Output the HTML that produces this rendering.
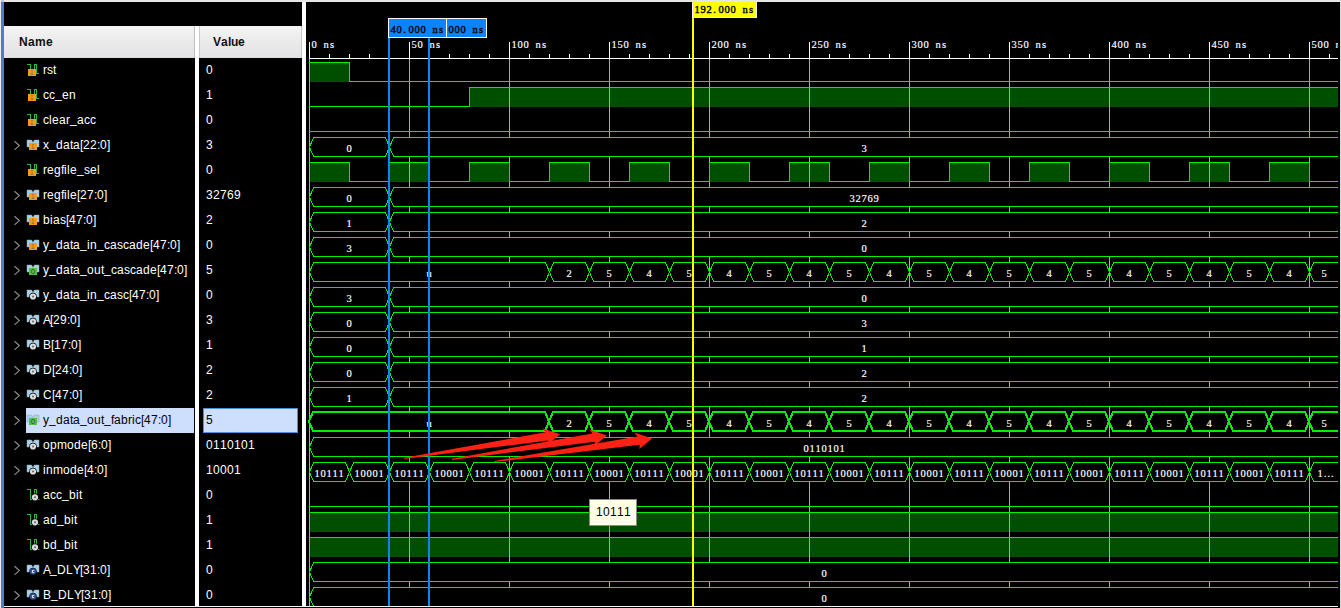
<!DOCTYPE html>
<html><head><meta charset="utf-8"><title>Waveform</title>
<style>
html,body{margin:0;padding:0;background:#000;overflow:hidden}
svg{display:block}
.a{font-family:'Liberation Sans',Arial,sans-serif;font-size:12px}
.m{font-family:'Liberation Serif','Times New Roman',serif;font-size:10.5px;stroke-width:0.18px;paint-order:stroke}
.w{fill:none;stroke:#00f000;stroke-width:1;shape-rendering:crispEdges}
.b{fill:#000;stroke:#00f000;stroke-width:1;shape-rendering:crispEdges}
.t{fill:none;stroke:#00f000;stroke-width:1;shape-rendering:crispEdges}
.s{fill:#000;stroke:#00f000;stroke-width:2;shape-rendering:crispEdges;stroke-linejoin:miter}
</style></head><body>
<svg width="1341" height="608" viewBox="0 0 1341 608">
<defs>
<linearGradient id="hg" x1="0" y1="0" x2="0" y2="1"><stop offset="0" stop-color="#f5f5f5"/><stop offset="0.5" stop-color="#eaeaeb"/><stop offset="1" stop-color="#e3e3e5"/></linearGradient>
<clipPath id="wc"><rect x="306" y="2" width="1032" height="604"/></clipPath>
</defs>

<rect x="0" y="0" width="1341" height="608" fill="#000"/>
<rect x="0" y="0" width="1341" height="2" fill="#e6e6e6"/>
<rect x="0" y="0" width="1" height="608" fill="#f0f0f0"/>
<rect x="1" y="0" width="3" height="608" fill="#4b7dd1"/>
<rect x="1" y="0" width="3" height="2" fill="#b8c8e8"/>
<rect x="195" y="26" width="4" height="580" fill="#fff"/>
<rect x="302" y="2" width="4" height="604" fill="#fff"/>
<rect x="1340" y="0" width="1" height="608" fill="#d8d8d8"/>
<rect x="4" y="606" width="1334" height="1" fill="#f4f4f4"/>
<rect x="1338" y="606" width="2" height="1" fill="#000"/>
<rect x="4" y="26" width="191" height="32" fill="url(#hg)"/>
<rect x="199" y="26" width="103" height="32" fill="url(#hg)"/>
<rect x="194" y="26" width="1" height="32" fill="#bfbfbf"/>
<rect x="199" y="26" width="1" height="32" fill="#c8c8c8"/>
<rect x="301" y="26" width="1" height="32" fill="#c8c8c8"/>
<rect x="4" y="57" width="190" height="1" fill="#dededf"/>
<rect x="200" y="57" width="101" height="1" fill="#dededf"/>
<text x="19 28 35 46" y="46" fill="#111" font-weight="bold" class="a">Name</text>
<text x="213 221 228 231 238" y="46" fill="#111" font-weight="bold" class="a">Value</text>
<path d="M27,64.5H30.5V70M34.5,70V64.5H36.5V73.5H39" fill="none" stroke="#35b14c" stroke-width="1.1"/>
<rect x="28" y="69" width="8" height="7" fill="#f79a1b"/>
<path d="M31,70.5H33M32,70.5V73.5" stroke="#9a6a3a" stroke-width="0.9" fill="none" opacity="0.7"/>
<ellipse cx="32" cy="74.2" rx="1.5" ry="0.6" fill="#5b6478" opacity="0.85"/>
<text x="43 47 53" y="74" fill="#fff" class="a">rst</text>
<text x="206" y="74" fill="#fff" class="a">0</text>
<path d="M27,89.5H30.5V95M34.5,95V89.5H36.5V98.5H39" fill="none" stroke="#35b14c" stroke-width="1.1"/>
<rect x="28" y="94" width="8" height="7" fill="#f79a1b"/>
<path d="M31,95.5H33M32,95.5V98.5" stroke="#9a6a3a" stroke-width="0.9" fill="none" opacity="0.7"/>
<ellipse cx="32" cy="99.2" rx="1.5" ry="0.6" fill="#5b6478" opacity="0.85"/>
<text x="43 49 55 62 69" y="99 99 98 99 99" fill="#fff" class="a">cc_en</text>
<text x="206" y="99" fill="#fff" class="a">1</text>
<path d="M27,114.5H30.5V120M34.5,120V114.5H36.5V123.5H39" fill="none" stroke="#35b14c" stroke-width="1.1"/>
<rect x="28" y="119" width="8" height="7" fill="#f79a1b"/>
<path d="M31,120.5H33M32,120.5V123.5" stroke="#9a6a3a" stroke-width="0.9" fill="none" opacity="0.7"/>
<ellipse cx="32" cy="124.2" rx="1.5" ry="0.6" fill="#5b6478" opacity="0.85"/>
<text x="43 49 52 59 66 70 77 84 90" y="124 124 124 124 124 123 124 124 124" fill="#fff" class="a">clear_acc</text>
<text x="206" y="124" fill="#fff" class="a">0</text>
<path d="M14.5,141.3L19.3,145.6L14.5,149.9" fill="none" stroke="#8c8c8c" stroke-width="1.2"/>
<path d="M27,140H31.6L33,142.6L34.4,140H39V147H36.5L35,145H31L29.5,147H27Z" fill="#a9d0e8" stroke="#8fa6b4" stroke-width="0.5"/>
<rect x="29" y="143" width="8" height="7" fill="#f79a1b"/>
<path d="M32,144.5H34M33,144.5V147.5" stroke="#9a6a3a" stroke-width="0.9" fill="none" opacity="0.7"/>
<ellipse cx="33" cy="148.2" rx="1.5" ry="0.6" fill="#5b6478" opacity="0.85"/>
<text x="43 49 56 63 70 73 80 83 90 97 100 107" y="149 148 149 149 149 149 149 149 149 149 149 149" fill="#fff" class="a">x_data[22:0]</text>
<text x="206" y="149" fill="#fff" class="a">3</text>
<path d="M27,164.5H30.5V170M34.5,170V164.5H36.5V173.5H39" fill="none" stroke="#35b14c" stroke-width="1.1"/>
<rect x="28" y="169" width="8" height="7" fill="#f79a1b"/>
<path d="M31,170.5H33M32,170.5V173.5" stroke="#9a6a3a" stroke-width="0.9" fill="none" opacity="0.7"/>
<ellipse cx="32" cy="174.2" rx="1.5" ry="0.6" fill="#5b6478" opacity="0.85"/>
<text x="43 47 54 61 64 67 70 77 84 90 97" y="174 174 174 174 174 174 174 173 174 174 174" fill="#fff" class="a">regfile_sel</text>
<text x="206" y="174" fill="#fff" class="a">0</text>
<path d="M14.5,191.3L19.3,195.6L14.5,199.9" fill="none" stroke="#8c8c8c" stroke-width="1.2"/>
<path d="M27,190H31.6L33,192.6L34.4,190H39V197H36.5L35,195H31L29.5,197H27Z" fill="#a9d0e8" stroke="#8fa6b4" stroke-width="0.5"/>
<rect x="29" y="193" width="8" height="7" fill="#f79a1b"/>
<path d="M32,194.5H34M33,194.5V197.5" stroke="#9a6a3a" stroke-width="0.9" fill="none" opacity="0.7"/>
<ellipse cx="33" cy="198.2" rx="1.5" ry="0.6" fill="#5b6478" opacity="0.85"/>
<text x="43 47 54 61 64 67 70 77 80 87 94 97 104" y="199" fill="#fff" class="a">regfile[27:0]</text>
<text x="206 213 220 227 234" y="199" fill="#fff" class="a">32769</text>
<path d="M14.5,216.3L19.3,220.6L14.5,224.9" fill="none" stroke="#8c8c8c" stroke-width="1.2"/>
<path d="M27,215H31.6L33,217.6L34.4,215H39V222H36.5L35,220H31L29.5,222H27Z" fill="#a9d0e8" stroke="#8fa6b4" stroke-width="0.5"/>
<rect x="29" y="218" width="8" height="7" fill="#f79a1b"/>
<path d="M32,219.5H34M33,219.5V222.5" stroke="#9a6a3a" stroke-width="0.9" fill="none" opacity="0.7"/>
<ellipse cx="33" cy="223.2" rx="1.5" ry="0.6" fill="#5b6478" opacity="0.85"/>
<text x="43 50 53 60 66 69 76 83 86 93" y="224" fill="#fff" class="a">bias[47:0]</text>
<text x="206" y="224" fill="#fff" class="a">2</text>
<path d="M14.5,241.3L19.3,245.6L14.5,249.9" fill="none" stroke="#8c8c8c" stroke-width="1.2"/>
<path d="M27,240H31.6L33,242.6L34.4,240H39V247H36.5L35,245H31L29.5,247H27Z" fill="#a9d0e8" stroke="#8fa6b4" stroke-width="0.5"/>
<rect x="29" y="243" width="8" height="7" fill="#f79a1b"/>
<path d="M32,244.5H34M33,244.5V247.5" stroke="#9a6a3a" stroke-width="0.9" fill="none" opacity="0.7"/>
<ellipse cx="33" cy="248.2" rx="1.5" ry="0.6" fill="#5b6478" opacity="0.85"/>
<text x="43 49 56 63 70 73 80 87 90 97 104 110 117 123 129 136 143 150 153 160 167 170 177" y="249 248 249 249 249 249 248 249 249 248 249 249 249 249 249 249 249 249 249 249 249 249 249" fill="#fff" class="a">y_data_in_cascade[47:0]</text>
<text x="206" y="249" fill="#fff" class="a">0</text>
<path d="M14.5,266.3L19.3,270.6L14.5,274.9" fill="none" stroke="#8c8c8c" stroke-width="1.2"/>
<path d="M27,265H31.6L33,267.6L34.4,265H39V272H36.5L35,270H31L29.5,272H27Z" fill="#a9d0e8" stroke="#8fa6b4" stroke-width="0.5"/>
<rect x="29" y="268" width="8" height="7" fill="#4fbf4a"/>
<ellipse cx="33" cy="271.5" rx="1.6" ry="2.2" fill="none" stroke="#4a5a4a" stroke-width="0.9"/>
<text x="43 49 56 63 70 73 80 87 94 101 104 111 117 124 130 136 143 150 157 160 167 174 177 184" y="274 273 274 274 274 274 273 274 274 274 273 274 274 274 274 274 274 274 274 274 274 274 274 274" fill="#fff" class="a">y_data_out_cascade[47:0]</text>
<text x="206" y="274" fill="#fff" class="a">5</text>
<path d="M14.5,291.3L19.3,295.6L14.5,299.9" fill="none" stroke="#8c8c8c" stroke-width="1.2"/>
<path d="M27,290H31.6L33,292.6L34.4,290H39V297H36.5L35,295H31L29.5,297H27Z" fill="#a9d0e8" stroke="#8fa6b4" stroke-width="0.5"/>
<circle cx="33" cy="296.5" r="3.7" fill="#000"/>
<circle cx="33" cy="296.5" r="3.1" fill="#dcdcdc"/>
<circle cx="33" cy="296.5" r="1.0" fill="#606060"/>
<text x="43 49 56 63 70 73 80 87 90 97 104 110 117 123 129 132 139 146 149 156" y="299 298 299 299 299 299 298 299 299 298 299 299 299 299 299 299 299 299 299 299" fill="#fff" class="a">y_data_in_casc[47:0]</text>
<text x="206" y="299" fill="#fff" class="a">0</text>
<path d="M14.5,316.3L19.3,320.6L14.5,324.9" fill="none" stroke="#8c8c8c" stroke-width="1.2"/>
<path d="M27,315H31.6L33,317.6L34.4,315H39V322H36.5L35,320H31L29.5,322H27Z" fill="#a9d0e8" stroke="#8fa6b4" stroke-width="0.5"/>
<circle cx="33" cy="321.5" r="3.7" fill="#000"/>
<circle cx="33" cy="321.5" r="3.1" fill="#dcdcdc"/>
<circle cx="33" cy="321.5" r="1.0" fill="#606060"/>
<text x="43 50 53 60 67 70 77" y="324" fill="#fff" class="a">A[29:0]</text>
<text x="206" y="324" fill="#fff" class="a">3</text>
<path d="M14.5,341.3L19.3,345.6L14.5,349.9" fill="none" stroke="#8c8c8c" stroke-width="1.2"/>
<path d="M27,340H31.6L33,342.6L34.4,340H39V347H36.5L35,345H31L29.5,347H27Z" fill="#a9d0e8" stroke="#8fa6b4" stroke-width="0.5"/>
<circle cx="33" cy="346.5" r="3.7" fill="#000"/>
<circle cx="33" cy="346.5" r="3.1" fill="#dcdcdc"/>
<circle cx="33" cy="346.5" r="1.0" fill="#606060"/>
<text x="43 51 54 61 68 71 78" y="349" fill="#fff" class="a">B[17:0]</text>
<text x="206" y="349" fill="#fff" class="a">1</text>
<path d="M14.5,366.3L19.3,370.6L14.5,374.9" fill="none" stroke="#8c8c8c" stroke-width="1.2"/>
<path d="M27,365H31.6L33,367.6L34.4,365H39V372H36.5L35,370H31L29.5,372H27Z" fill="#a9d0e8" stroke="#8fa6b4" stroke-width="0.5"/>
<circle cx="33" cy="371.5" r="3.7" fill="#000"/>
<circle cx="33" cy="371.5" r="3.1" fill="#dcdcdc"/>
<circle cx="33" cy="371.5" r="1.0" fill="#606060"/>
<text x="43 52 55 62 69 72 79" y="374" fill="#fff" class="a">D[24:0]</text>
<text x="206" y="374" fill="#fff" class="a">2</text>
<path d="M14.5,391.3L19.3,395.6L14.5,399.9" fill="none" stroke="#8c8c8c" stroke-width="1.2"/>
<path d="M27,390H31.6L33,392.6L34.4,390H39V397H36.5L35,395H31L29.5,397H27Z" fill="#a9d0e8" stroke="#8fa6b4" stroke-width="0.5"/>
<circle cx="33" cy="396.5" r="3.7" fill="#000"/>
<circle cx="33" cy="396.5" r="3.1" fill="#dcdcdc"/>
<circle cx="33" cy="396.5" r="1.0" fill="#606060"/>
<text x="43 52 55 62 69 72 79" y="399" fill="#fff" class="a">C[47:0]</text>
<text x="206" y="399" fill="#fff" class="a">2</text>
<rect x="26" y="408" width="168" height="25" fill="#cddffd"/>
<rect x="203" y="408" width="95" height="25" fill="#4a90d9"/>
<rect x="204" y="409" width="93" height="23" fill="#cddffd"/>
<path d="M14.5,416.3L19.3,420.6L14.5,424.9" fill="none" stroke="#8c8c8c" stroke-width="1.2"/>
<path d="M27,415H31.6L33,417.6L34.4,415H39V422H36.5L35,420H31L29.5,422H27Z" fill="#a9d0e8" stroke="#8fa6b4" stroke-width="0.5"/>
<rect x="29" y="418" width="8" height="7" fill="#4fbf4a"/>
<ellipse cx="33" cy="421.5" rx="1.6" ry="2.2" fill="none" stroke="#4a5a4a" stroke-width="0.9"/>
<text x="43 49 56 63 70 73 80 87 94 101 104 111 114 121 128 132 135 141 144 151 158 161 168" y="424 423 424 424 424 424 423 424 424 424 423 424 424 424 424 424 424 424 424 424 424 424 424" fill="#000" class="a">y_data_out_fabric[47:0]</text>
<text x="206" y="424" fill="#000" class="a">5</text>
<path d="M14.5,441.3L19.3,445.6L14.5,449.9" fill="none" stroke="#8c8c8c" stroke-width="1.2"/>
<path d="M27,440H31.6L33,442.6L34.4,440H39V447H36.5L35,445H31L29.5,447H27Z" fill="#a9d0e8" stroke="#8fa6b4" stroke-width="0.5"/>
<circle cx="33" cy="446.5" r="3.7" fill="#000"/>
<circle cx="33" cy="446.5" r="3.1" fill="#dcdcdc"/>
<circle cx="33" cy="446.5" r="1.0" fill="#606060"/>
<text x="43 50 57 67 74 81 88 91 98 101 108" y="449" fill="#fff" class="a">opmode[6:0]</text>
<text x="206 213 220 227 234 241 248" y="449" fill="#fff" class="a">0110101</text>
<path d="M14.5,466.3L19.3,470.6L14.5,474.9" fill="none" stroke="#8c8c8c" stroke-width="1.2"/>
<path d="M27,465H31.6L33,467.6L34.4,465H39V472H36.5L35,470H31L29.5,472H27Z" fill="#a9d0e8" stroke="#8fa6b4" stroke-width="0.5"/>
<circle cx="33" cy="471.5" r="3.7" fill="#000"/>
<circle cx="33" cy="471.5" r="3.1" fill="#dcdcdc"/>
<circle cx="33" cy="471.5" r="1.0" fill="#606060"/>
<text x="43 46 53 63 70 77 84 87 94 97 104" y="474" fill="#fff" class="a">inmode[4:0]</text>
<text x="206 213 220 227 234" y="474" fill="#fff" class="a">10001</text>
<path d="M27,489.5H30.5V499.5H33M34.5,495V489.5H36.5V495M37,499.5H39.5" fill="none" stroke="#35b14c" stroke-width="1.1"/>
<circle cx="35" cy="497.3" r="3.7" fill="#000"/>
<circle cx="35" cy="497.3" r="3.1" fill="#dcdcdc"/>
<circle cx="35" cy="497.3" r="1.0" fill="#606060"/>
<text x="43 50 56 62 69 76 79" y="499 499 499 498 499 499 499" fill="#fff" class="a">acc_bit</text>
<text x="206" y="499" fill="#fff" class="a">0</text>
<path d="M27,514.5H30.5V524.5H33M34.5,520V514.5H36.5V520M37,524.5H39.5" fill="none" stroke="#35b14c" stroke-width="1.1"/>
<circle cx="35" cy="522.3" r="3.7" fill="#000"/>
<circle cx="35" cy="522.3" r="3.1" fill="#dcdcdc"/>
<circle cx="35" cy="522.3" r="1.0" fill="#606060"/>
<text x="43 50 57 64 71 74" y="524 524 523 524 524 524" fill="#fff" class="a">ad_bit</text>
<text x="206" y="524" fill="#fff" class="a">1</text>
<path d="M27,539.5H30.5V549.5H33M34.5,545V539.5H36.5V545M37,549.5H39.5" fill="none" stroke="#35b14c" stroke-width="1.1"/>
<circle cx="35" cy="547.3" r="3.7" fill="#000"/>
<circle cx="35" cy="547.3" r="3.1" fill="#dcdcdc"/>
<circle cx="35" cy="547.3" r="1.0" fill="#606060"/>
<text x="43 50 57 64 71 74" y="549 549 548 549 549 549" fill="#fff" class="a">bd_bit</text>
<text x="206" y="549" fill="#fff" class="a">1</text>
<path d="M14.5,566.3L19.3,570.6L14.5,574.9" fill="none" stroke="#8c8c8c" stroke-width="1.2"/>
<path d="M27,565H31.6L33,567.6L34.4,565H39V572H36.5L35,570H31L29.5,572H27Z" fill="#a9d0e8" stroke="#8fa6b4" stroke-width="0.5"/>
<circle cx="33" cy="571.5" r="3.7" fill="#000"/>
<circle cx="33" cy="571.5" r="3.2" fill="#2d4f90"/>
<path d="M34.3,570.4H32.4V572.6H34.3" fill="none" stroke="#fff" stroke-width="0.9"/>
<text x="43 50 57 66 73 80 83 90 97 100 107" y="574 573 574 574 574 574 574 574 574 574 574" fill="#fff" class="a">A_DLY[31:0]</text>
<text x="206" y="574" fill="#fff" class="a">0</text>
<path d="M14.5,591.3L19.3,595.6L14.5,599.9" fill="none" stroke="#8c8c8c" stroke-width="1.2"/>
<path d="M27,590H31.6L33,592.6L34.4,590H39V597H36.5L35,595H31L29.5,597H27Z" fill="#a9d0e8" stroke="#8fa6b4" stroke-width="0.5"/>
<circle cx="33" cy="596.5" r="3.7" fill="#000"/>
<circle cx="33" cy="596.5" r="3.2" fill="#2d4f90"/>
<path d="M34.3,595.4H32.4V597.6H34.3" fill="none" stroke="#fff" stroke-width="0.9"/>
<text x="43 51 58 67 74 81 84 91 98 101 108" y="599 598 599 599 599 599 599 599 599 599 599" fill="#fff" class="a">B_DLY[31:0]</text>
<text x="206" y="599" fill="#fff" class="a">0</text>
<g clip-path="url(#wc)">
<rect x="309" y="58" width="1029" height="1" fill="#fff"/>
<rect x="309" y="42" width="1" height="16" fill="#fff"/>
<text x="311.4 317.4 323.4 329.9" y="48" fill="#fff" stroke="#fff" class="m">0 ns</text>
<rect x="329" y="54" width="1" height="4" fill="#fff"/>
<rect x="349" y="54" width="1" height="4" fill="#fff"/>
<rect x="369" y="54" width="1" height="4" fill="#fff"/>
<rect x="389" y="54" width="1" height="4" fill="#fff"/>
<rect x="409" y="42" width="1" height="16" fill="#fff"/>
<text x="411.4 417.4 423.4 429.4 435.9" y="48" fill="#fff" stroke="#fff" class="m">50 ns</text>
<rect x="429" y="54" width="1" height="4" fill="#fff"/>
<rect x="449" y="54" width="1" height="4" fill="#fff"/>
<rect x="469" y="54" width="1" height="4" fill="#fff"/>
<rect x="489" y="54" width="1" height="4" fill="#fff"/>
<rect x="509" y="42" width="1" height="16" fill="#fff"/>
<text x="511.4 517.4 523.4 529.4 535.4 541.9" y="48" fill="#fff" stroke="#fff" class="m">100 ns</text>
<rect x="529" y="54" width="1" height="4" fill="#fff"/>
<rect x="549" y="54" width="1" height="4" fill="#fff"/>
<rect x="569" y="54" width="1" height="4" fill="#fff"/>
<rect x="589" y="54" width="1" height="4" fill="#fff"/>
<rect x="609" y="42" width="1" height="16" fill="#fff"/>
<text x="611.4 617.4 623.4 629.4 635.4 641.9" y="48" fill="#fff" stroke="#fff" class="m">150 ns</text>
<rect x="629" y="54" width="1" height="4" fill="#fff"/>
<rect x="649" y="54" width="1" height="4" fill="#fff"/>
<rect x="669" y="54" width="1" height="4" fill="#fff"/>
<rect x="689" y="54" width="1" height="4" fill="#fff"/>
<rect x="709" y="42" width="1" height="16" fill="#fff"/>
<text x="711.4 717.4 723.4 729.4 735.4 741.9" y="48" fill="#fff" stroke="#fff" class="m">200 ns</text>
<rect x="729" y="54" width="1" height="4" fill="#fff"/>
<rect x="749" y="54" width="1" height="4" fill="#fff"/>
<rect x="769" y="54" width="1" height="4" fill="#fff"/>
<rect x="789" y="54" width="1" height="4" fill="#fff"/>
<rect x="809" y="42" width="1" height="16" fill="#fff"/>
<text x="811.4 817.4 823.4 829.4 835.4 841.9" y="48" fill="#fff" stroke="#fff" class="m">250 ns</text>
<rect x="829" y="54" width="1" height="4" fill="#fff"/>
<rect x="849" y="54" width="1" height="4" fill="#fff"/>
<rect x="869" y="54" width="1" height="4" fill="#fff"/>
<rect x="889" y="54" width="1" height="4" fill="#fff"/>
<rect x="909" y="42" width="1" height="16" fill="#fff"/>
<text x="911.4 917.4 923.4 929.4 935.4 941.9" y="48" fill="#fff" stroke="#fff" class="m">300 ns</text>
<rect x="929" y="54" width="1" height="4" fill="#fff"/>
<rect x="949" y="54" width="1" height="4" fill="#fff"/>
<rect x="969" y="54" width="1" height="4" fill="#fff"/>
<rect x="989" y="54" width="1" height="4" fill="#fff"/>
<rect x="1009" y="42" width="1" height="16" fill="#fff"/>
<text x="1011.4 1017.4 1023.4 1029.4 1035.4 1041.9" y="48" fill="#fff" stroke="#fff" class="m">350 ns</text>
<rect x="1029" y="54" width="1" height="4" fill="#fff"/>
<rect x="1049" y="54" width="1" height="4" fill="#fff"/>
<rect x="1069" y="54" width="1" height="4" fill="#fff"/>
<rect x="1089" y="54" width="1" height="4" fill="#fff"/>
<rect x="1109" y="42" width="1" height="16" fill="#fff"/>
<text x="1111.4 1117.4 1123.4 1129.4 1135.4 1141.9" y="48" fill="#fff" stroke="#fff" class="m">400 ns</text>
<rect x="1129" y="54" width="1" height="4" fill="#fff"/>
<rect x="1149" y="54" width="1" height="4" fill="#fff"/>
<rect x="1169" y="54" width="1" height="4" fill="#fff"/>
<rect x="1189" y="54" width="1" height="4" fill="#fff"/>
<rect x="1209" y="42" width="1" height="16" fill="#fff"/>
<text x="1211.4 1217.4 1223.4 1229.4 1235.4 1241.9" y="48" fill="#fff" stroke="#fff" class="m">450 ns</text>
<rect x="1229" y="54" width="1" height="4" fill="#fff"/>
<rect x="1249" y="54" width="1" height="4" fill="#fff"/>
<rect x="1269" y="54" width="1" height="4" fill="#fff"/>
<rect x="1289" y="54" width="1" height="4" fill="#fff"/>
<rect x="1309" y="42" width="1" height="16" fill="#fff"/>
<text x="1311.4 1317.4 1323.4 1329.4 1335.4 1341.9" y="48" fill="#fff" stroke="#fff" class="m">500 ns</text>
<rect x="1329" y="54" width="1" height="4" fill="#fff"/>
<rect x="309" y="62" width="41" height="20" fill="#004e00"/>
<rect x="469" y="87" width="875" height="20" fill="#004e00"/>
<rect x="309" y="162" width="41" height="20" fill="#004e00"/>
<rect x="389" y="162" width="41" height="20" fill="#004e00"/>
<rect x="469" y="162" width="41" height="20" fill="#004e00"/>
<rect x="549" y="162" width="41" height="20" fill="#004e00"/>
<rect x="629" y="162" width="41" height="20" fill="#004e00"/>
<rect x="709" y="162" width="41" height="20" fill="#004e00"/>
<rect x="789" y="162" width="41" height="20" fill="#004e00"/>
<rect x="869" y="162" width="41" height="20" fill="#004e00"/>
<rect x="949" y="162" width="41" height="20" fill="#004e00"/>
<rect x="1029" y="162" width="41" height="20" fill="#004e00"/>
<rect x="1109" y="162" width="41" height="20" fill="#004e00"/>
<rect x="1189" y="162" width="41" height="20" fill="#004e00"/>
<rect x="1269" y="162" width="41" height="20" fill="#004e00"/>
<rect x="309" y="512" width="1035" height="20" fill="#004e00"/>
<rect x="309" y="537" width="1035" height="20" fill="#004e00"/>
<rect x="309" y="59" width="1" height="547" fill="#a8a8a8"/>
<rect x="409" y="59" width="1" height="547" fill="#a8a8a8"/>
<rect x="509" y="59" width="1" height="547" fill="#a8a8a8"/>
<rect x="609" y="59" width="1" height="547" fill="#a8a8a8"/>
<rect x="709" y="59" width="1" height="547" fill="#a8a8a8"/>
<rect x="809" y="59" width="1" height="547" fill="#a8a8a8"/>
<rect x="909" y="59" width="1" height="547" fill="#a8a8a8"/>
<rect x="1009" y="59" width="1" height="547" fill="#a8a8a8"/>
<rect x="1109" y="59" width="1" height="547" fill="#a8a8a8"/>
<rect x="1209" y="59" width="1" height="547" fill="#a8a8a8"/>
<rect x="1309" y="59" width="1" height="547" fill="#a8a8a8"/>
<path class="b" d="M309.5,147.0L313.5,137.5H385.5L389.5,147.0L385.5,156.5H313.5Z"/>
<path class="b" d="M1346,137.5H393.5L389.5,147.0L393.5,156.5H1346"/>
<text x="346.4" y="152" fill="#fff" stroke="#fff" class="m">0</text>
<text x="861.4" y="152" fill="#fff" stroke="#fff" class="m">3</text>
<path class="b" d="M309.5,197.0L313.5,187.5H385.5L389.5,197.0L385.5,206.5H313.5Z"/>
<path class="b" d="M1346,187.5H393.5L389.5,197.0L393.5,206.5H1346"/>
<text x="346.4" y="202" fill="#fff" stroke="#fff" class="m">0</text>
<text x="849.4 855.4 861.4 867.4 873.4" y="202" fill="#fff" stroke="#fff" class="m">32769</text>
<path class="b" d="M309.5,222.0L313.5,212.5H385.5L389.5,222.0L385.5,231.5H313.5Z"/>
<path class="b" d="M1346,212.5H393.5L389.5,222.0L393.5,231.5H1346"/>
<text x="346.4" y="227" fill="#fff" stroke="#fff" class="m">1</text>
<text x="861.4" y="227" fill="#fff" stroke="#fff" class="m">2</text>
<path class="b" d="M309.5,247.0L313.5,237.5H385.5L389.5,247.0L385.5,256.5H313.5Z"/>
<path class="b" d="M1346,237.5H393.5L389.5,247.0L393.5,256.5H1346"/>
<text x="346.4" y="252" fill="#fff" stroke="#fff" class="m">3</text>
<text x="861.4" y="252" fill="#fff" stroke="#fff" class="m">0</text>
<path class="b" d="M309.5,272.0L313.5,262.5H545.5L549.5,272.0L545.5,281.5H313.5Z"/>
<path class="b" d="M549.5,272.0L553.5,262.5H585.5L589.5,272.0L585.5,281.5H553.5Z"/>
<path class="b" d="M589.5,272.0L593.5,262.5H625.5L629.5,272.0L625.5,281.5H593.5Z"/>
<path class="b" d="M629.5,272.0L633.5,262.5H665.5L669.5,272.0L665.5,281.5H633.5Z"/>
<path class="b" d="M669.5,272.0L673.5,262.5H705.5L709.5,272.0L705.5,281.5H673.5Z"/>
<path class="b" d="M709.5,272.0L713.5,262.5H745.5L749.5,272.0L745.5,281.5H713.5Z"/>
<path class="b" d="M749.5,272.0L753.5,262.5H785.5L789.5,272.0L785.5,281.5H753.5Z"/>
<path class="b" d="M789.5,272.0L793.5,262.5H825.5L829.5,272.0L825.5,281.5H793.5Z"/>
<path class="b" d="M829.5,272.0L833.5,262.5H865.5L869.5,272.0L865.5,281.5H833.5Z"/>
<path class="b" d="M869.5,272.0L873.5,262.5H905.5L909.5,272.0L905.5,281.5H873.5Z"/>
<path class="b" d="M909.5,272.0L913.5,262.5H945.5L949.5,272.0L945.5,281.5H913.5Z"/>
<path class="b" d="M949.5,272.0L953.5,262.5H985.5L989.5,272.0L985.5,281.5H953.5Z"/>
<path class="b" d="M989.5,272.0L993.5,262.5H1025.5L1029.5,272.0L1025.5,281.5H993.5Z"/>
<path class="b" d="M1029.5,272.0L1033.5,262.5H1065.5L1069.5,272.0L1065.5,281.5H1033.5Z"/>
<path class="b" d="M1069.5,272.0L1073.5,262.5H1105.5L1109.5,272.0L1105.5,281.5H1073.5Z"/>
<path class="b" d="M1109.5,272.0L1113.5,262.5H1145.5L1149.5,272.0L1145.5,281.5H1113.5Z"/>
<path class="b" d="M1149.5,272.0L1153.5,262.5H1185.5L1189.5,272.0L1185.5,281.5H1153.5Z"/>
<path class="b" d="M1189.5,272.0L1193.5,262.5H1225.5L1229.5,272.0L1225.5,281.5H1193.5Z"/>
<path class="b" d="M1229.5,272.0L1233.5,262.5H1265.5L1269.5,272.0L1265.5,281.5H1233.5Z"/>
<path class="b" d="M1269.5,272.0L1273.5,262.5H1305.5L1309.5,272.0L1305.5,281.5H1273.5Z"/>
<path class="b" d="M1346,262.5H1313.5L1309.5,272.0L1313.5,281.5H1346"/>
<text x="426.4" y="277" fill="#fff" stroke="#fff" class="m">u</text>
<text x="566.4" y="277" fill="#fff" stroke="#fff" class="m">2</text>
<text x="606.4" y="277" fill="#fff" stroke="#fff" class="m">5</text>
<text x="646.4" y="277" fill="#fff" stroke="#fff" class="m">4</text>
<text x="686.4" y="277" fill="#fff" stroke="#fff" class="m">5</text>
<text x="726.4" y="277" fill="#fff" stroke="#fff" class="m">4</text>
<text x="766.4" y="277" fill="#fff" stroke="#fff" class="m">5</text>
<text x="806.4" y="277" fill="#fff" stroke="#fff" class="m">4</text>
<text x="846.4" y="277" fill="#fff" stroke="#fff" class="m">5</text>
<text x="886.4" y="277" fill="#fff" stroke="#fff" class="m">4</text>
<text x="926.4" y="277" fill="#fff" stroke="#fff" class="m">5</text>
<text x="966.4" y="277" fill="#fff" stroke="#fff" class="m">4</text>
<text x="1006.4" y="277" fill="#fff" stroke="#fff" class="m">5</text>
<text x="1046.4" y="277" fill="#fff" stroke="#fff" class="m">4</text>
<text x="1086.4" y="277" fill="#fff" stroke="#fff" class="m">5</text>
<text x="1126.4" y="277" fill="#fff" stroke="#fff" class="m">4</text>
<text x="1166.4" y="277" fill="#fff" stroke="#fff" class="m">5</text>
<text x="1206.4" y="277" fill="#fff" stroke="#fff" class="m">4</text>
<text x="1246.4" y="277" fill="#fff" stroke="#fff" class="m">5</text>
<text x="1286.4" y="277" fill="#fff" stroke="#fff" class="m">4</text>
<text x="1321.4" y="277" fill="#fff" stroke="#fff" class="m">5</text>
<path class="b" d="M309.5,297.0L313.5,287.5H385.5L389.5,297.0L385.5,306.5H313.5Z"/>
<path class="b" d="M1346,287.5H393.5L389.5,297.0L393.5,306.5H1346"/>
<text x="346.4" y="302" fill="#fff" stroke="#fff" class="m">3</text>
<text x="861.4" y="302" fill="#fff" stroke="#fff" class="m">0</text>
<path class="b" d="M309.5,322.0L313.5,312.5H385.5L389.5,322.0L385.5,331.5H313.5Z"/>
<path class="b" d="M1346,312.5H393.5L389.5,322.0L393.5,331.5H1346"/>
<text x="346.4" y="327" fill="#fff" stroke="#fff" class="m">0</text>
<text x="861.4" y="327" fill="#fff" stroke="#fff" class="m">3</text>
<path class="b" d="M309.5,347.0L313.5,337.5H385.5L389.5,347.0L385.5,356.5H313.5Z"/>
<path class="b" d="M1346,337.5H393.5L389.5,347.0L393.5,356.5H1346"/>
<text x="346.4" y="352" fill="#fff" stroke="#fff" class="m">0</text>
<text x="861.4" y="352" fill="#fff" stroke="#fff" class="m">1</text>
<path class="b" d="M309.5,372.0L313.5,362.5H385.5L389.5,372.0L385.5,381.5H313.5Z"/>
<path class="b" d="M1346,362.5H393.5L389.5,372.0L393.5,381.5H1346"/>
<text x="346.4" y="377" fill="#fff" stroke="#fff" class="m">0</text>
<text x="861.4" y="377" fill="#fff" stroke="#fff" class="m">2</text>
<path class="b" d="M309.5,397.0L313.5,387.5H385.5L389.5,397.0L385.5,406.5H313.5Z"/>
<path class="b" d="M1346,387.5H393.5L389.5,397.0L393.5,406.5H1346"/>
<text x="346.4" y="402" fill="#fff" stroke="#fff" class="m">1</text>
<text x="861.4" y="402" fill="#fff" stroke="#fff" class="m">2</text>
<path class="s" d="M309.0,421.5L313.0,412.0H545.0L549.0,421.5L545.0,431.0H313.0Z"/>
<path class="s" d="M549.0,421.5L553.0,412.0H585.0L589.0,421.5L585.0,431.0H553.0Z"/>
<path class="s" d="M589.0,421.5L593.0,412.0H625.0L629.0,421.5L625.0,431.0H593.0Z"/>
<path class="s" d="M629.0,421.5L633.0,412.0H665.0L669.0,421.5L665.0,431.0H633.0Z"/>
<path class="s" d="M669.0,421.5L673.0,412.0H705.0L709.0,421.5L705.0,431.0H673.0Z"/>
<path class="s" d="M709.0,421.5L713.0,412.0H745.0L749.0,421.5L745.0,431.0H713.0Z"/>
<path class="s" d="M749.0,421.5L753.0,412.0H785.0L789.0,421.5L785.0,431.0H753.0Z"/>
<path class="s" d="M789.0,421.5L793.0,412.0H825.0L829.0,421.5L825.0,431.0H793.0Z"/>
<path class="s" d="M829.0,421.5L833.0,412.0H865.0L869.0,421.5L865.0,431.0H833.0Z"/>
<path class="s" d="M869.0,421.5L873.0,412.0H905.0L909.0,421.5L905.0,431.0H873.0Z"/>
<path class="s" d="M909.0,421.5L913.0,412.0H945.0L949.0,421.5L945.0,431.0H913.0Z"/>
<path class="s" d="M949.0,421.5L953.0,412.0H985.0L989.0,421.5L985.0,431.0H953.0Z"/>
<path class="s" d="M989.0,421.5L993.0,412.0H1025.0L1029.0,421.5L1025.0,431.0H993.0Z"/>
<path class="s" d="M1029.0,421.5L1033.0,412.0H1065.0L1069.0,421.5L1065.0,431.0H1033.0Z"/>
<path class="s" d="M1069.0,421.5L1073.0,412.0H1105.0L1109.0,421.5L1105.0,431.0H1073.0Z"/>
<path class="s" d="M1109.0,421.5L1113.0,412.0H1145.0L1149.0,421.5L1145.0,431.0H1113.0Z"/>
<path class="s" d="M1149.0,421.5L1153.0,412.0H1185.0L1189.0,421.5L1185.0,431.0H1153.0Z"/>
<path class="s" d="M1189.0,421.5L1193.0,412.0H1225.0L1229.0,421.5L1225.0,431.0H1193.0Z"/>
<path class="s" d="M1229.0,421.5L1233.0,412.0H1265.0L1269.0,421.5L1265.0,431.0H1233.0Z"/>
<path class="s" d="M1269.0,421.5L1273.0,412.0H1305.0L1309.0,421.5L1305.0,431.0H1273.0Z"/>
<path class="s" d="M1346,412.0H1313.0L1309.0,421.5L1313.0,431.0H1346"/>
<text x="426.4" y="427" fill="#fff" stroke="#fff" class="m">u</text>
<text x="566.4" y="427" fill="#fff" stroke="#fff" class="m">2</text>
<text x="606.4" y="427" fill="#fff" stroke="#fff" class="m">5</text>
<text x="646.4" y="427" fill="#fff" stroke="#fff" class="m">4</text>
<text x="686.4" y="427" fill="#fff" stroke="#fff" class="m">5</text>
<text x="726.4" y="427" fill="#fff" stroke="#fff" class="m">4</text>
<text x="766.4" y="427" fill="#fff" stroke="#fff" class="m">5</text>
<text x="806.4" y="427" fill="#fff" stroke="#fff" class="m">4</text>
<text x="846.4" y="427" fill="#fff" stroke="#fff" class="m">5</text>
<text x="886.4" y="427" fill="#fff" stroke="#fff" class="m">4</text>
<text x="926.4" y="427" fill="#fff" stroke="#fff" class="m">5</text>
<text x="966.4" y="427" fill="#fff" stroke="#fff" class="m">4</text>
<text x="1006.4" y="427" fill="#fff" stroke="#fff" class="m">5</text>
<text x="1046.4" y="427" fill="#fff" stroke="#fff" class="m">4</text>
<text x="1086.4" y="427" fill="#fff" stroke="#fff" class="m">5</text>
<text x="1126.4" y="427" fill="#fff" stroke="#fff" class="m">4</text>
<text x="1166.4" y="427" fill="#fff" stroke="#fff" class="m">5</text>
<text x="1206.4" y="427" fill="#fff" stroke="#fff" class="m">4</text>
<text x="1246.4" y="427" fill="#fff" stroke="#fff" class="m">5</text>
<text x="1286.4" y="427" fill="#fff" stroke="#fff" class="m">4</text>
<text x="1321.4" y="427" fill="#fff" stroke="#fff" class="m">5</text>
<path class="b" d="M1346,437.5H313.5L309.5,447.0L313.5,456.5H1346"/>
<text x="803.4 809.4 815.4 821.4 827.4 833.4 839.4" y="452" fill="#fff" stroke="#fff" class="m">0110101</text>
<path class="b" d="M309.5,472.0L313.5,462.5H345.5L349.5,472.0L345.5,481.5H313.5Z"/>
<path class="b" d="M349.5,472.0L353.5,462.5H385.5L389.5,472.0L385.5,481.5H353.5Z"/>
<path class="b" d="M389.5,472.0L393.5,462.5H425.5L429.5,472.0L425.5,481.5H393.5Z"/>
<path class="b" d="M429.5,472.0L433.5,462.5H465.5L469.5,472.0L465.5,481.5H433.5Z"/>
<path class="b" d="M469.5,472.0L473.5,462.5H505.5L509.5,472.0L505.5,481.5H473.5Z"/>
<path class="b" d="M509.5,472.0L513.5,462.5H545.5L549.5,472.0L545.5,481.5H513.5Z"/>
<path class="b" d="M549.5,472.0L553.5,462.5H585.5L589.5,472.0L585.5,481.5H553.5Z"/>
<path class="b" d="M589.5,472.0L593.5,462.5H625.5L629.5,472.0L625.5,481.5H593.5Z"/>
<path class="b" d="M629.5,472.0L633.5,462.5H665.5L669.5,472.0L665.5,481.5H633.5Z"/>
<path class="b" d="M669.5,472.0L673.5,462.5H705.5L709.5,472.0L705.5,481.5H673.5Z"/>
<path class="b" d="M709.5,472.0L713.5,462.5H745.5L749.5,472.0L745.5,481.5H713.5Z"/>
<path class="b" d="M749.5,472.0L753.5,462.5H785.5L789.5,472.0L785.5,481.5H753.5Z"/>
<path class="b" d="M789.5,472.0L793.5,462.5H825.5L829.5,472.0L825.5,481.5H793.5Z"/>
<path class="b" d="M829.5,472.0L833.5,462.5H865.5L869.5,472.0L865.5,481.5H833.5Z"/>
<path class="b" d="M869.5,472.0L873.5,462.5H905.5L909.5,472.0L905.5,481.5H873.5Z"/>
<path class="b" d="M909.5,472.0L913.5,462.5H945.5L949.5,472.0L945.5,481.5H913.5Z"/>
<path class="b" d="M949.5,472.0L953.5,462.5H985.5L989.5,472.0L985.5,481.5H953.5Z"/>
<path class="b" d="M989.5,472.0L993.5,462.5H1025.5L1029.5,472.0L1025.5,481.5H993.5Z"/>
<path class="b" d="M1029.5,472.0L1033.5,462.5H1065.5L1069.5,472.0L1065.5,481.5H1033.5Z"/>
<path class="b" d="M1069.5,472.0L1073.5,462.5H1105.5L1109.5,472.0L1105.5,481.5H1073.5Z"/>
<path class="b" d="M1109.5,472.0L1113.5,462.5H1145.5L1149.5,472.0L1145.5,481.5H1113.5Z"/>
<path class="b" d="M1149.5,472.0L1153.5,462.5H1185.5L1189.5,472.0L1185.5,481.5H1153.5Z"/>
<path class="b" d="M1189.5,472.0L1193.5,462.5H1225.5L1229.5,472.0L1225.5,481.5H1193.5Z"/>
<path class="b" d="M1229.5,472.0L1233.5,462.5H1265.5L1269.5,472.0L1265.5,481.5H1233.5Z"/>
<path class="b" d="M1269.5,472.0L1273.5,462.5H1305.5L1309.5,472.0L1305.5,481.5H1273.5Z"/>
<path class="b" d="M1346,462.5H1313.5L1309.5,472.0L1313.5,481.5H1346"/>
<text x="314.4 320.4 326.4 332.4 338.4" y="477" fill="#fff" stroke="#fff" class="m">10111</text>
<text x="354.4 360.4 366.4 372.4 378.4" y="477" fill="#fff" stroke="#fff" class="m">10001</text>
<text x="394.4 400.4 406.4 412.4 418.4" y="477" fill="#fff" stroke="#fff" class="m">10111</text>
<text x="434.4 440.4 446.4 452.4 458.4" y="477" fill="#fff" stroke="#fff" class="m">10001</text>
<text x="474.4 480.4 486.4 492.4 498.4" y="477" fill="#fff" stroke="#fff" class="m">10111</text>
<text x="514.4 520.4 526.4 532.4 538.4" y="477" fill="#fff" stroke="#fff" class="m">10001</text>
<text x="554.4 560.4 566.4 572.4 578.4" y="477" fill="#fff" stroke="#fff" class="m">10111</text>
<text x="594.4 600.4 606.4 612.4 618.4" y="477" fill="#fff" stroke="#fff" class="m">10001</text>
<text x="634.4 640.4 646.4 652.4 658.4" y="477" fill="#fff" stroke="#fff" class="m">10111</text>
<text x="674.4 680.4 686.4 692.4 698.4" y="477" fill="#fff" stroke="#fff" class="m">10001</text>
<text x="714.4 720.4 726.4 732.4 738.4" y="477" fill="#fff" stroke="#fff" class="m">10111</text>
<text x="754.4 760.4 766.4 772.4 778.4" y="477" fill="#fff" stroke="#fff" class="m">10001</text>
<text x="794.4 800.4 806.4 812.4 818.4" y="477" fill="#fff" stroke="#fff" class="m">10111</text>
<text x="834.4 840.4 846.4 852.4 858.4" y="477" fill="#fff" stroke="#fff" class="m">10001</text>
<text x="874.4 880.4 886.4 892.4 898.4" y="477" fill="#fff" stroke="#fff" class="m">10111</text>
<text x="914.4 920.4 926.4 932.4 938.4" y="477" fill="#fff" stroke="#fff" class="m">10001</text>
<text x="954.4 960.4 966.4 972.4 978.4" y="477" fill="#fff" stroke="#fff" class="m">10111</text>
<text x="994.4 1000.4 1006.4 1012.4 1018.4" y="477" fill="#fff" stroke="#fff" class="m">10001</text>
<text x="1034.4 1040.4 1046.4 1052.4 1058.4" y="477" fill="#fff" stroke="#fff" class="m">10111</text>
<text x="1074.4 1080.4 1086.4 1092.4 1098.4" y="477" fill="#fff" stroke="#fff" class="m">10001</text>
<text x="1114.4 1120.4 1126.4 1132.4 1138.4" y="477" fill="#fff" stroke="#fff" class="m">10111</text>
<text x="1154.4 1160.4 1166.4 1172.4 1178.4" y="477" fill="#fff" stroke="#fff" class="m">10001</text>
<text x="1194.4 1200.4 1206.4 1212.4 1218.4" y="477" fill="#fff" stroke="#fff" class="m">10111</text>
<text x="1234.4 1240.4 1246.4 1252.4 1258.4" y="477" fill="#fff" stroke="#fff" class="m">10001</text>
<text x="1274.4 1280.4 1286.4 1292.4 1298.4" y="477" fill="#fff" stroke="#fff" class="m">10111</text>
<text x="1317.4 1323.4" y="477" fill="#fff" stroke="#fff" class="m">1…</text>
<path class="b" d="M1346,562.5H313.5L309.5,572.0L313.5,581.5H1346"/>
<text x="821.4" y="577" fill="#fff" stroke="#fff" class="m">0</text>
<path class="b" d="M1346,587.5H313.5L309.5,597.0L313.5,606.5H1346"/>
<text x="821.4" y="602" fill="#fff" stroke="#fff" class="m">0</text>
<path class="w" d="M309,62.5H349.5V81.5H1343.5"/>
<path class="w" d="M309,106.5H469.5V87.5H1343.5"/>
<path class="w" d="M309,131.5H1343.5"/>
<path class="w" d="M309,162.5H349.5V181.5H389.5V162.5H429.5V181.5H469.5V162.5H509.5V181.5H549.5V162.5H589.5V181.5H629.5V162.5H669.5V181.5H709.5V162.5H749.5V181.5H789.5V162.5H829.5V181.5H869.5V162.5H909.5V181.5H949.5V162.5H989.5V181.5H1029.5V162.5H1069.5V181.5H1109.5V162.5H1149.5V181.5H1189.5V162.5H1229.5V181.5H1269.5V162.5H1309.5V181.5H1343.5"/>
<path class="w" d="M309,506.5H1343.5"/>
<path class="w" d="M309,512.5H1343.5"/>
<path class="w" d="M309,537.5H1343.5"/>
<rect x="388" y="38" width="2" height="568" fill="#0a84ff"/>
<rect x="428" y="38" width="2" height="568" fill="#0a84ff"/>
<rect x="692" y="18" width="2" height="588" fill="#ffff00"/>
<rect x="388" y="18" width="59" height="20" fill="#fffdf5"/>
<rect x="389" y="19" width="57" height="18" fill="#0a84ff"/>
<rect x="446" y="18" width="41" height="20" fill="#fffdf5"/>
<rect x="447" y="19" width="39" height="18" fill="#0a84ff"/>
<text x="390.4 396.4 403.2 408.4 414.4 420.4 426.4 432.4 438.9" y="33" fill="#000" stroke="#000" class="m" style="stroke-width:0.4px">40.000 ns</text>
<text x="448.4 454.4 460.4 466.4 472.4 478.9" y="33" fill="#000" stroke="#000" class="m" style="stroke-width:0.4px">000 ns</text>
<rect x="692" y="2" width="65" height="16" fill="#f0f0ff"/>
<rect x="693" y="2" width="63" height="15" fill="#ffff00"/>
<text x="694.4 700.4 706.4 713.2 718.4 724.4 730.4 736.4 742.4 748.9" y="13" fill="#000" stroke="#000" class="m" style="stroke-width:0.4px">192.000 ns</text>
<polygon points="404.3,459.0 404.1,457.8 545.5,432.2 542.4,428.3 560.0,434.3 547.5,444.9 547.8,440.5" fill="#fb2114"/>
<polygon points="452.1,459.9 451.9,458.7 592.4,433.4 589.3,429.5 606.9,435.5 594.4,446.1 594.7,441.7" fill="#fb2114"/>
<polygon points="494.4,462.1 494.2,460.9 637.5,436.4 634.4,432.5 652.0,438.6 639.4,449.1 639.8,444.7" fill="#fb2114"/>
<rect x="589" y="499" width="48" height="27" fill="#8a8a8a"/>
<rect x="590" y="500" width="46" height="25" fill="#ffffe6"/>
<text x="596 603 610 617 624" y="516" fill="#000" class="a">10111</text>
</g>
</svg></body></html>
